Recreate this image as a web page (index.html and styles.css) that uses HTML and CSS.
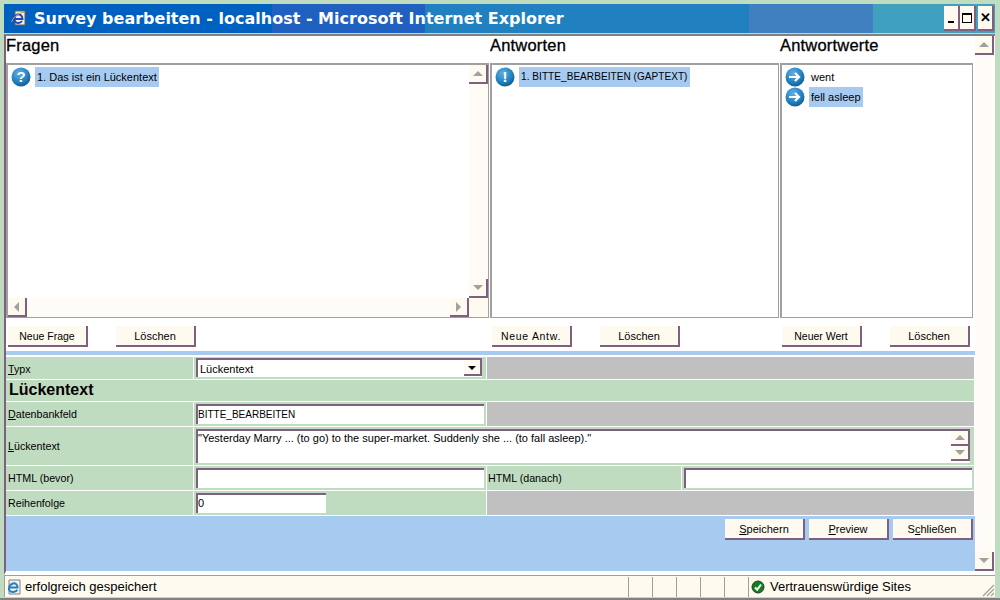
FILE: index.html
```html
<!DOCTYPE html>
<html lang="de">
<head>
<meta charset="utf-8">
<title>Survey bearbeiten</title>
<link rel="stylesheet" href="styles.css">
</head>
<body>
<div class="window">
  <header class="titlebar">
    <svg class="ie-icon" width="18" height="18" viewBox="0 0 18 18"><path d="M5 2h10v14H5z" fill="#f0f0dc" stroke="#606060"/><path d="M4 10h8.5C12.5 6 9.5 5 7.5 5.5 4.5 6.5 3.5 10 5 12.500c1.500 2 5 2 7-.5" fill="none" stroke="#2048c0" stroke-width="2"/><path d="M1.500 13C4 7 10 3 14 3.500" fill="none" stroke="#d8a040"/></svg>
    <span class="title">Survey bearbeiten - localhost - Microsoft Internet Explorer</span>
    <div class="winbtns">
      <span class="winbtn"><i class="min"></i></span>
      <span class="winbtn"><i class="max"></i></span>
      <span class="winbtn gap">&#10005;</span>
    </div>
  </header>
  <div class="client">
    <main class="page">
      <div class="cols">
        <section class="col c1">
          <h2>Fragen</h2>
          <div class="list">
            <div class="row">
              <svg class="bullet" width="20" height="20" viewBox="0 0 20 20"><use href="#ball"/><text x="10" y="15" text-anchor="middle" class="gl">?</text></svg>
              <span class="sel">1. Das ist ein Lückentext</span>
            </div>
            <div class="vbar"><span class="sb up"></span><span class="sb down"></span></div>
            <div class="hbar"><span class="sb left"></span><span class="sb right"></span></div>
            <div class="corner"></div>
          </div>
          <div class="btns"><button class="b b1">Neue Frage</button><button class="b b2">Löschen</button></div>
        </section>
        <section class="col c2">
          <h2>Antworten</h2>
          <div class="list">
            <div class="row">
              <svg class="bullet" width="20" height="20" viewBox="0 0 20 20"><use href="#ball"/><text x="10" y="15" text-anchor="middle" class="gl">!</text></svg>
              <span class="sel caps">1. BITTE_BEARBEITEN (GAPTEXT)</span>
            </div>
          </div>
          <div class="btns"><button class="b b1 wide">Neue Antw.</button><button class="b b2">Löschen</button></div>
        </section>
        <section class="col c3">
          <h2>Antwortwerte</h2>
          <div class="list">
            <div class="row">
              <svg class="bullet" width="20" height="20" viewBox="0 0 20 20"><use href="#ball"/><use href="#arrow"/></svg>
              <span class="plain">went</span>
            </div>
            <div class="row">
              <svg class="bullet" width="20" height="20" viewBox="0 0 20 20"><use href="#ball"/><use href="#arrow"/></svg>
              <span class="sel">fell asleep</span>
            </div>
          </div>
          <div class="btns"><button class="b b1">Neuer Wert</button><button class="b b2">Löschen</button></div>
        </section>
      </div>
      <div class="rule"></div>
      <div class="form">
        <div class="fr r-typ">
          <label class="lb w1"><u>T</u>ypx</label>
          <div class="fd w2 padsel"><div class="select"><span>Lückentext</span><span class="dd"></span></div></div>
          <div class="grey"></div>
        </div>
        <div class="heading">Lückentext</div>
        <div class="fr r-db">
          <label class="lb w1"><u>D</u>atenbankfeld</label>
          <div class="fd w2 pad"><div class="input full caps">BITTE_BEARBEITEN</div></div>
          <div class="grey"></div>
        </div>
        <div class="fr r-txt">
          <label class="lb w1"><u>L</u>ückentext</label>
          <div class="fd grow pad">
            <div class="input area">"Yesterday Marry ... (to go) to the super-market. Suddenly she ... (to fall asleep)."
              <div class="areabar"><span class="sb up"></span><span class="sb down"></span></div>
            </div>
          </div>
        </div>
        <div class="fr r-html">
          <label class="lb w1">HTML (bevor)</label>
          <div class="fd w2 pad"><div class="input full"></div></div>
          <label class="lb w3">HTML (danach)</label>
          <div class="fd grow pad"><div class="input full"></div></div>
        </div>
        <div class="fr r-seq">
          <label class="lb w1">Reihenfolge</label>
          <div class="fd w2 pad"><div class="input seq">0</div></div>
          <div class="grey"></div>
        </div>
      </div>
      <div class="footer">
        <button class="b bf"><u>S</u>peichern</button>
        <button class="b bf"><u>P</u>review</button>
        <button class="b bf">S<u>c</u>hließen</button>
      </div>
    </main>
    <aside class="pagebar"><span class="sb up"></span><span class="sb down"></span></aside>
  </div>
  <footer class="status">
    <svg class="st-ie" width="16" height="16" viewBox="0 0 16 16"><path d="M3 1h11v14H3z" fill="#f0f0f0" stroke="#808080"/><path d="M3 8.500h8.500C11.500 5 9 4 7 4.500 3.500 5.500 2 9 3.500 11.500c1.500 2 5.500 2 8-.5" fill="none" stroke="#2080c0" stroke-width="2"/></svg>
    <span class="st-msg">erfolgreich gespeichert</span>
    <span class="cell"></span><span class="cell"></span><span class="cell"></span><span class="cell"></span><span class="cell"></span>
    <div class="zone">
      <svg width="14" height="14" viewBox="0 0 14 14"><circle cx="7" cy="7" r="6" fill="#108020" stroke="#204020"/><path d="M4 7.500l2.200 2.200L10 4.500" fill="none" stroke="#fff" stroke-width="2"/></svg>
      <span>Vertrauenswürdige Sites</span>
    </div>
    <svg class="grip" width="14" height="14" viewBox="0 0 14 14"><path d="M13 2L2 13M13 6L6 13M13 10L10 13" stroke="#a0a0a0" stroke-width="1.200"/></svg>
  </footer>
</div>
<svg class="defs" width="0" height="0">
  <defs>
    <radialGradient id="bg" cx="0.4" cy="0.3" r="0.8"><stop offset="0" stop-color="#60b0e0"/><stop offset="0.6" stop-color="#2080c0"/><stop offset="1" stop-color="#105080"/></radialGradient>
    <g id="ball"><circle cx="10" cy="10" r="9.500" fill="url(#bg)"/></g>
    <path id="arrow" d="M4 10h10M10 6l4 4-4 4" fill="none" stroke="#fff" stroke-width="2.200"/>
  </defs>
</svg>
</body>
</html>
```
FILE: styles.css
```css
* { box-sizing: border-box; }
html, body { margin: 0; height: 100%; }
body { width: 1000px; height: 600px; overflow: hidden; font-family: "Liberation Sans", Arial, sans-serif; font-size: 11px; color: #000; background: #c0dcc0; }
.window { width: 1000px; height: 600px; padding: 4px 5px 1px 4px; display: flex; flex-direction: column; background: #c0dcc0; border-bottom: 2px solid #808080; }
.titlebar { height: 29px; flex: none; display: flex; align-items: center; padding-left: 6px; background: linear-gradient(to right, #0060c0 0 268px, #2060c0 268px 421px, #2080c0 421px 745px, #4080c0 745px 869px, #40a0c0 869px); }
.ie-icon { flex: none; margin-top: -1px; }
.title { margin-left: 6px; font-family: "DejaVu Sans", sans-serif; font-size: 16px; font-weight: 700; color: #fff; white-space: nowrap; }
.winbtns { margin-left: auto; display: flex; align-items: center; padding-right: 1px; }
.winbtn { width: 16px; height: 25px; background: #fffaf0; border-right: 2px solid #806080; border-bottom: 2px solid #806080; display: flex; align-items: center; justify-content: center; font-size: 13px; font-weight: 700; }
.winbtn.gap { margin-left: 2px; }
.winbtn .min { width: 6px; height: 2px; background: #000; margin-top: 8px; }
.winbtn .max { width: 10px; height: 10px; border: 1px solid #000; border-top-width: 2px; }
.client { flex: 1; min-height: 0; display: flex; margin-top: 1px; background: #fff; border-top: 2px solid #808080; border-left: 2px solid #806080; border-bottom: 4px solid #fff; }
.page { width: 969px; flex: none; display: flex; flex-direction: column; }
.cols { display: flex; height: 315px; flex: none; }
.col { flex: none; display: flex; flex-direction: column; }
.c1 { width: 484px; }
.c2 { width: 290px; }
.c3 { width: 194px; }
.col h2 { margin: 0; height: 27px; font-size: 16.500px; font-weight: 400; letter-spacing: 0.200px; line-height: 18px; -webkit-text-stroke: 0.300px #000; flex: none; }
.list { position: relative; height: 255px; flex: none; margin-right: 1px; background: #fff; border-top: 2px solid #a0a0a0; border-left: 2px solid #a0a0a0; border-right: 1px solid #a0a0a0; border-bottom: 1px solid #a0a0a0; padding: 2px 3px; }
.row { display: flex; align-items: center; height: 20px; }
.bullet { flex: none; }
.gl { font: 700 15px "Liberation Sans", sans-serif; fill: #fff; }
.sel { margin-left: 4px; height: 20px; line-height: 20px; padding: 0 2px; background: #a6caf0; white-space: nowrap; font-size: 11px; }
.sel.caps { font-size: 10px; letter-spacing: 0.070px; }
.plain { margin-left: 4px; line-height: 20px; padding: 0 2px; font-size: 11px; }
.vbar { position: absolute; top: 0; right: 0; bottom: 19px; width: 19px; background: #fffcf7; display: flex; flex-direction: column; justify-content: space-between; }
.hbar { position: absolute; left: 0; right: 19px; bottom: 0; height: 19px; background: #fffcf7; display: flex; justify-content: space-between; }
.corner { position: absolute; right: 0; bottom: 0; width: 19px; height: 19px; background: #fffaf0; }
.sb { position: relative; display: block; width: 19px; height: 19px; flex: none; background: #fffaf0; border-right: 2px solid #806080; border-bottom: 2px solid #806080; }
.sb::after { content: ""; position: absolute; left: 50%; top: 50%; border: 5px solid transparent; }
.up::after { margin: -8px 0 0 -5px; border-bottom-color: #a0a0a0; }
.down::after { margin: -3px 0 0 -5px; border-top-color: #a0a0a0; }
.left::after { margin: -5px 0 0 -8px; border-right-color: #a0a0a0; }
.right::after { margin: -5px 0 0 -3px; border-left-color: #a0a0a0; }
.btns { display: flex; height: 33px; flex: none; padding-top: 8px; padding-left: 2px; gap: 28px; }
.b { width: 80px; height: 21px; padding: 0; flex: none; font: 10.500px "Liberation Sans", Arial, sans-serif; color: #000; background: #fffaf0; border: 0; border-right: 2px solid #806080; border-bottom: 2px solid #806080; }
.b2, .bf { font-size: 11px; }
.wide { letter-spacing: 0.700px; }
.rule { height: 4px; flex: none; background: #a6caf0; }
.form { flex: none; margin-right: 1px; background: #fff; padding-top: 2px; display: flex; flex-direction: column; gap: 1px; }
.fr { display: flex; gap: 1px; }
.r-typ { height: 22px; }
.r-db { height: 24px; }
.r-txt { height: 38px; }
.r-html { height: 24px; }
.r-seq { height: 24px; }
.heading { height: 21px; background: #c0dcc0; font-size: 16px; font-weight: 700; line-height: 20px; padding-left: 3px; }
.lb { background: #c0dcc0; font-size: 10.700px; padding-left: 2px; white-space: pre; flex: none; display: block; }
.w1 { width: 187px; line-height: 24px; }
.r-db .w1, .r-html .lb { line-height: 25px; }
.r-txt .w1 { line-height: 38px; }
.w3 { width: 194px; padding-left: 1px; }
.w2 { width: 292px; flex: none; }
.fd { background: #c0dcc0; }
.grow { flex: 1; min-width: 0; }
.pad { padding: 2px; }
.padsel { padding: 1px 2px; }
.grey { flex: 1; background: #c0c0c0; }
.select { display: flex; justify-content: space-between; align-items: center; height: 19px; width: 286px; background: #fff; border-top: 2px solid #806080; border-left: 2px solid #806080; padding: 0 0 0 2px; font-size: 11px; }
.dd { position: relative; width: 18px; height: 16px; margin-top: -1px; background: #fffaf0; border-right: 2px solid #806080; border-bottom: 2px solid #806080; }
.dd::after { content: ""; position: absolute; left: 4px; top: 6px; border: 4px solid transparent; border-top-color: #000; }
.input { background: #fff; border-top: 2px solid #806080; border-left: 2px solid #806080; font-size: 11px; line-height: 17px; height: 100%; white-space: nowrap; }
.input.caps { font-size: 10px; }
.full { width: 100%; }
.area { position: relative; line-height: 15px; margin-right: 2px; }
.areabar { position: absolute; right: 0; top: 0; display: flex; flex-direction: column; }
.areabar .sb { width: 19px; height: 15px; }
.seq { width: 130px; }
.footer { flex: 1; min-height: 0; background: #a6caf0; display: flex; justify-content: flex-end; gap: 4px; padding: 3px 2px 0 0; margin-top: 1px; }
.pagebar { flex: 1; min-width: 0; background: #fffcf7; display: flex; flex-direction: column; justify-content: space-between; align-items: flex-start; }
.status { height: 22px; flex: none; display: flex; align-items: center; background: #fffaf0; border-top: 1px solid #a0a0a0; border-left: 1px solid #a0a0a0; font-size: 13px; }
.st-ie { flex: none; margin-left: 1px; }
.st-msg { width: 603px; margin-left: 3px; flex: none; }
.cell { width: 24px; height: 20px; flex: none; border-left: 1px solid #a0a0a0; }
.zone { height: 20px; display: flex; align-items: center; gap: 5px; padding-left: 2px; border-left: 1px solid #a0a0a0; }
.grip { margin-left: auto; align-self: flex-end; }
.defs { position: absolute; }
```
